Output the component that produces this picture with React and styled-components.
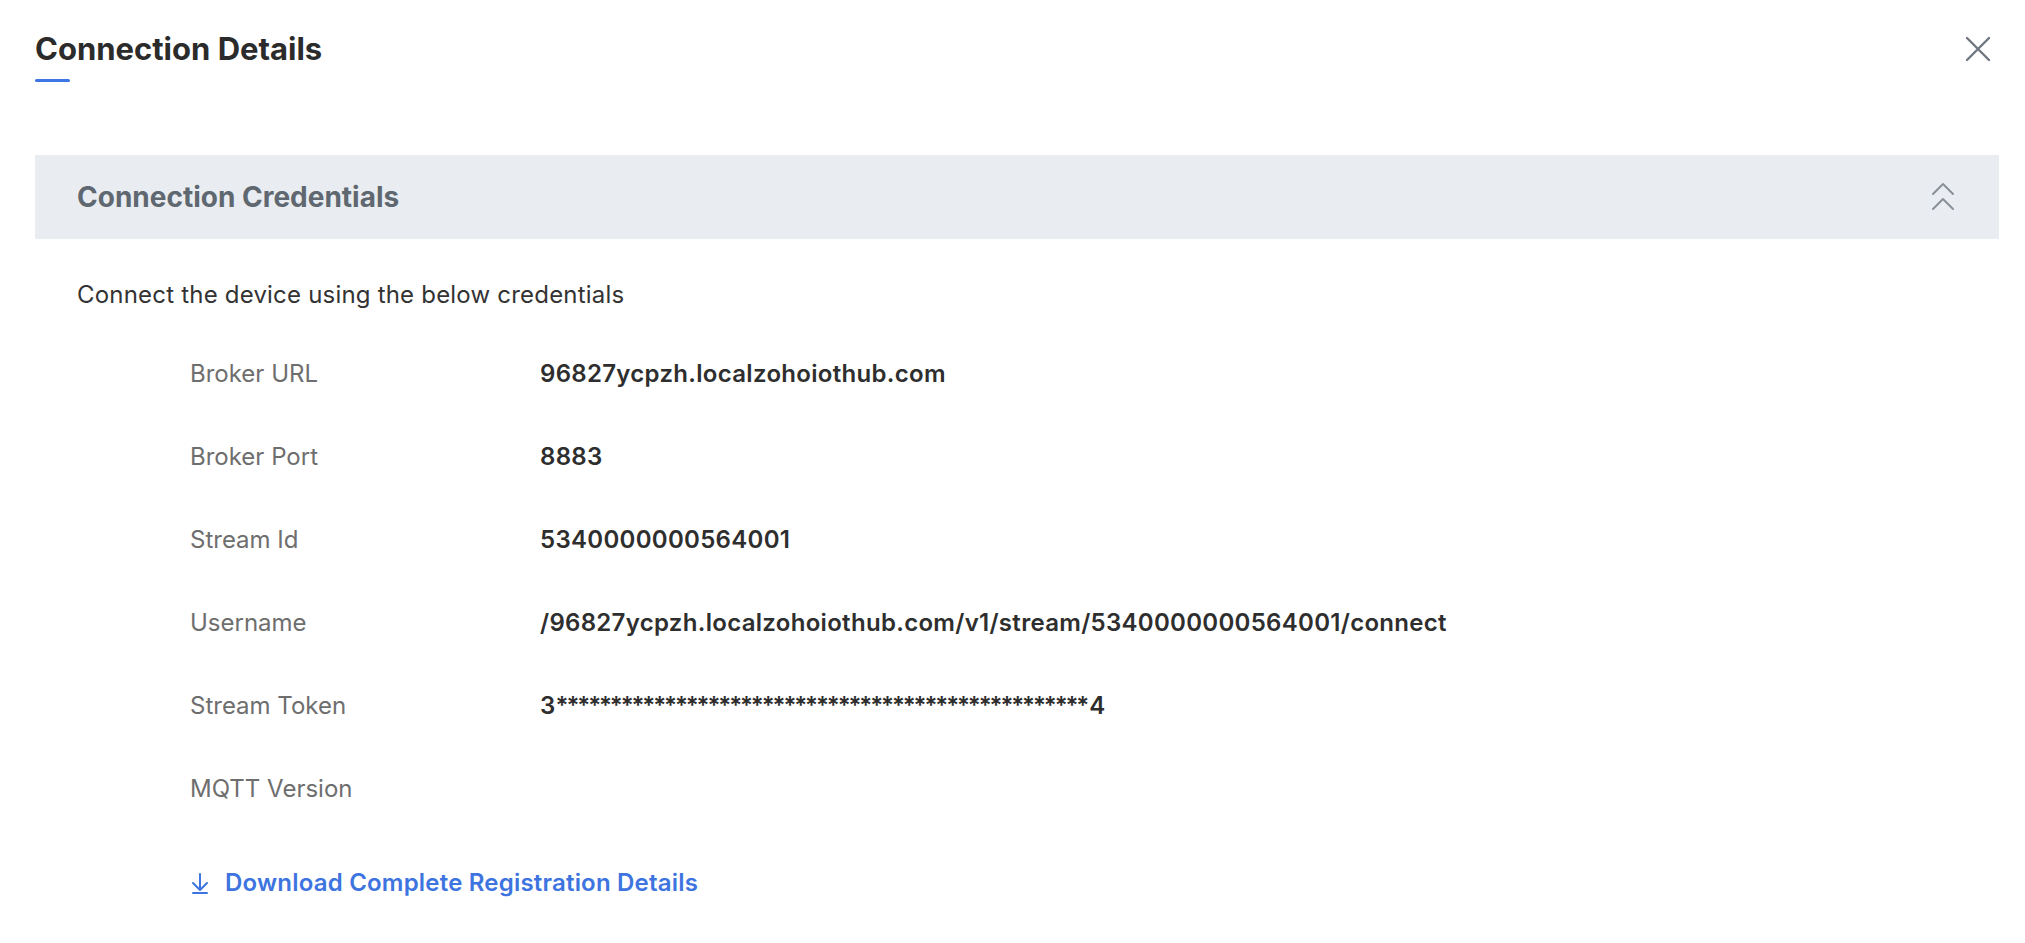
import React from "react";
import styled, { createGlobalStyle } from "styled-components";

const GlobalStyle = createGlobalStyle`
  html, body {
    margin: 0;
    padding: 0;
    background: #ffffff;
  }
  body {
    font-family: Inter, "Open Sans", "Liberation Sans", sans-serif;
    color: #2f2f2f;
  }
`;

const Page = styled.div`
  padding: 0 26px 0 35px;
  box-sizing: border-box;
  width: 2025px;
`;

const Header = styled.div`
  display: flex;
  justify-content: space-between;
  align-items: flex-start;
  padding-top: 31px;
`;

const TitleBlock = styled.div`
  display: flex;
  flex-direction: column;
`;

const Title = styled.h1`
  margin: 0;
  font-size: 31px;
  line-height: 36px;
  font-weight: 700;
  color: #2b2b2b;
`;

const Underline = styled.div`
  width: 35px;
  height: 3px;
  margin-top: 12px;
  border-radius: 2px;
  background: #3e76e3;
`;

const CloseButton = styled.button`
  border: none;
  background: none;
  padding: 0;
  margin: 5px 8px 0 0;
  width: 26px;
  height: 26px;
  cursor: pointer;
  color: #6f7780;
  display: flex;
  align-items: center;
  justify-content: center;
`;

const Band = styled.div`
  margin-top: 73px;
  height: 84px;
  background: #e9edf1;
  display: flex;
  align-items: center;
  justify-content: space-between;
  padding: 0 44px 0 42px;
`;

const BandTitle = styled.h2`
  margin: 0;
  font-size: 28px;
  font-weight: 700;
  color: #5f6870;
`;

const Body = styled.div`
  padding: 41px 0 0 42px;
`;

const Intro = styled.p`
  margin: 0;
  font-size: 24px;
  line-height: 30px;
  letter-spacing: 0.2px;
  color: #333333;
`;

const Rows = styled.div`
  display: grid;
  grid-template-columns: 350px 1fr;
  grid-auto-rows: 83px;
  padding-left: 113px;
  margin-top: 22px;
`;

const Label = styled.div`
  display: flex;
  align-items: center;
  font-size: 24px;
  color: #6e6e6e;
`;

const Value = styled.div`
  display: flex;
  align-items: center;
  font-size: 24px;
  font-weight: 600;
  letter-spacing: 0.3px;
  color: #2e2e2e;
`;

const Mask = styled.span`
  letter-spacing: -2.1px;
  margin-right: 2.1px;
`;

const DownloadLink = styled.a`
  display: inline-flex;
  align-items: center;
  gap: 16px;
  margin: 38px 0 0 114px;
  font-size: 24px;
  font-weight: 600;
  letter-spacing: 0.2px;
  color: #3d74e0;
  text-decoration: none;
  cursor: pointer;
`;

const rows = [
  ["Broker URL", "96827ycpzh.localzohoiothub.com"],
  ["Broker Port", "8883"],
  ["Stream Id", "5340000000564001"],
  ["Username", "/96827ycpzh.localzohoiothub.com/v1/stream/5340000000564001/connect"],
  [
    "Stream Token",
    <>
      3<Mask>{"*".repeat(49)}</Mask>4
    </>,
  ],
  ["MQTT Version", ""],
];

const App = () => {
  return (
    <Page>
      <GlobalStyle />
      <Header>
        <TitleBlock>
          <Title>Connection Details</Title>
          <Underline />
        </TitleBlock>
        <CloseButton aria-label="Close">
          <svg width="26" height="26" viewBox="0 0 26 26" fill="none" stroke="currentColor" strokeWidth="2.4" strokeLinecap="round">
            <path d="M2 2 L24 24 M24 2 L2 24" />
          </svg>
        </CloseButton>
      </Header>
      <Band>
        <BandTitle>Connection Credentials</BandTitle>
        <svg width="24" height="30" viewBox="0 0 24 30" fill="none" stroke="#8a9098" strokeWidth="2" strokeLinecap="round" strokeLinejoin="round">
          <path d="M2 12 L12 2 L22 12" />
          <path d="M2 27 L12 17 L22 27" />
        </svg>
      </Band>
      <Body>
        <Intro>Connect the device using the below credentials</Intro>
        <Rows>
          {rows.map(([label, value]) => (
            <React.Fragment key={label}>
              <Label>{label}</Label>
              <Value>{value}</Value>
            </React.Fragment>
          ))}
        </Rows>
        <DownloadLink>
          <svg width="18" height="22" viewBox="0 0 18 22" fill="none" stroke="currentColor" strokeWidth="2" strokeLinecap="round" strokeLinejoin="round">
            <path d="M9 2 V18 M2 11 L9 18 L16 11 M2 21 H16" />
          </svg>
          Download Complete Registration Details
        </DownloadLink>
      </Body>
    </Page>
  );
};

export default App;
